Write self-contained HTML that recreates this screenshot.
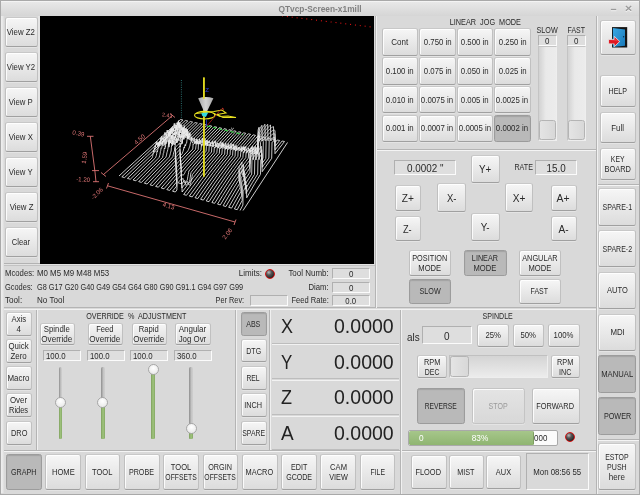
<!DOCTYPE html>
<html><head><meta charset="utf-8"><title>QTvcp-Screen-x1mill</title>
<style>
html,body{margin:0;padding:0}
body{width:640px;height:495px;overflow:hidden;position:relative;background:#d9d9d9;font-family:"Liberation Sans",sans-serif;font-size:8.25px;color:#2a2a2a}
#root{position:absolute;left:0;top:0;width:640px;height:495px;will-change:transform}
#frame{position:absolute;left:0;top:0;width:638px;height:493px;border:1px solid #a9a9a9;pointer-events:none}
#title{position:absolute;left:0;top:0;width:640px;height:16px;background:linear-gradient(#fff 0,#fff 1px,#e8e8e8 2px,#d6d6d6 15.5px,#d9d9d9)}
#lstrip{position:absolute;left:1px;top:16px;width:3px;height:477px;background:linear-gradient(to right,#efefef,#e6e6e6 70%,#d9d9d9)}
#title .wc{position:absolute;left:608px;top:0}
#title .tt{position:absolute;left:0;width:640px;top:2px;text-align:center;font-weight:bold;font-size:9.1px;line-height:14px;color:#808080}
.b{position:absolute;box-sizing:border-box;border:1px solid #c0c0c0;border-top-color:#c8c8c8;border-bottom-color:#a0a0a0;border-radius:2.5px;background:linear-gradient(#f6f6f6,#dcdcdc);display:flex;align-items:center;justify-content:center;text-align:center;line-height:1.2;white-space:nowrap;box-shadow:inset 1px 1px 0 rgba(255,255,255,.85),0 1px 0 rgba(255,255,255,.3)}
.b>div{position:relative;top:1.2px}
.b.ic>div{top:0}
.f>div{position:relative;top:1px}
.l{display:block;white-space:nowrap}
.t .l{display:inline-block}
.b.p{background:#b9b9b9;border-color:#9c9c9c;box-shadow:inset 0 1px 1px rgba(0,0,0,.12)}
.b.dis{background:linear-gradient(#e4e4e4,#d8d8d8);color:#9a9a9a;border-color:#c4c4c4}
.b.ic div{line-height:0}
.f{position:absolute;box-sizing:border-box;border:1px solid;border-color:#b0b0b0 #fbfbfb #fbfbfb #b0b0b0;background:#dedede;display:flex;align-items:center;justify-content:center;white-space:nowrap}
.f.fl{justify-content:flex-start;padding-left:2px}
.f.clock{background:#d9d9d9}
.t{position:absolute;white-space:nowrap}
.hl{position:absolute;height:1px;background:#b4b4b4;box-shadow:0 1px 0 #f4f4f4}
.vl{position:absolute;width:1px;background:#b4b4b4;box-shadow:1px 0 0 #f0f0f0}
#gl{position:absolute;left:40px;top:16px;width:334px;height:248px;background:#000;overflow:hidden}
#gl text{font-family:"Liberation Sans",sans-serif}
.led{position:absolute;width:10px;height:10px;border-radius:50%;box-sizing:border-box;border:1.4px solid #d01010;background:radial-gradient(circle at 35% 30%,#bbb 0,#555 35%,#222 80%)}
.groove{position:absolute;box-sizing:border-box;background:linear-gradient(to right,#d2d2d2,#e9e9e9 40%,#ececec);border:1px solid;border-color:#c4c4c4 #eee #eee #c4c4c4}
.hgroove{position:absolute;box-sizing:border-box;background:linear-gradient(#d4d4d4,#ececec);border:1px solid;border-color:#c0c0c0 #eee #eee #c0c0c0}
.hd{position:absolute;box-sizing:border-box;border:1px solid #b4b4b4;border-radius:2.5px;background:linear-gradient(to right,#e4e4e4,#d8d8d8)}
.pb{position:absolute;box-sizing:border-box;border:1px solid #a9a9a9;border-radius:2px;background:#fbfbfb;overflow:hidden}
.pbg{position:absolute;left:0;top:0;height:100%;background:linear-gradient(#a6c68a,#8fb571);border-right:1px solid #7d9f60;border-radius:1.5px}
.pbt{position:absolute;top:0;line-height:15.5px;font-size:8.25px;color:#2a2a2a}
.pbt.w{color:#fff}
.vg{position:absolute;box-sizing:border-box;background:linear-gradient(to right,#8e8e8e,#c4c4c4 60%,#cfcfcf);border-radius:1.5px;overflow:hidden}
.vgf{position:absolute;left:0;right:0;bottom:0;background:linear-gradient(to right,#7e9f5e,#9cc07a 45%,#9cc07a 60%,#84a764)}
.knob{position:absolute;width:11px;height:11px;box-sizing:border-box;border-radius:50%;border:1px solid #a6a6a6;background:radial-gradient(circle at 50% 35%,#fff,#ececec 70%)}
.dro{position:absolute;box-sizing:border-box;border-top:1px solid #f2f2f2;border-bottom:1px solid #bdbdbd;background:#d9d9d9;font-size:20.5px;color:#222}
.dro .ax{position:absolute;left:9.5px;top:50%;line-height:20px;margin-top:-10px}
.dro .nm{position:absolute;right:5.5px;top:50%;line-height:20px;margin-top:-10px}
</style></head>
<body>
<div id="root">
<div id="title"><span class="tt"><span class="l" style="transform:scaleX(0.918);transform-origin:center center">QTvcp-Screen-x1mill</span></span><svg class="wc" width="30" height="15" viewBox="0 0 30 15"><g stroke="#f6f6f6" stroke-width="1.3" fill="none"><path d="M2.9 10.5 H8.2"/><path d="M17.9 7.1 L23.2 11.8 M23.2 7.1 L17.9 11.8"/></g><g stroke="#9a9a9a" stroke-width="1.3" fill="none"><path d="M2.9 9.5 H8.2"/><path d="M17.9 6.1 L23.2 10.8 M23.2 6.1 L17.9 10.8"/></g></svg></div>
<div style="position:absolute;left:1px;top:263px;width:39px;height:1px;background:#b2b2b2"></div>
<div style="position:absolute;left:1px;top:264px;width:374px;height:1px;background:#e2e2e2"></div>
<div style="position:absolute;left:1px;top:265px;width:374px;height:1px;background:#c2c2c2"></div>
<div style="position:absolute;left:38px;top:16px;width:2px;height:247px;background:#e4e4e4"></div>
<div style="position:absolute;left:1px;top:307px;width:595px;height:1px;background:#b4b4b4"></div>
<div style="position:absolute;left:1px;top:309px;width:595px;height:1px;background:#f2f2f2"></div>
<div class="hl" style="left:1px;top:450px;width:595px"></div>
<div class="hl" style="left:375px;top:149px;width:221px"></div>
<div class="hl" style="left:597px;top:184px;width:42px"></div>
<div class="hl" style="left:597px;top:439px;width:42px"></div>
<div class="vl" style="left:375px;top:16px;height:292px"></div>
<div class="vl" style="left:596px;top:16px;height:478px"></div>
<div class="vl" style="left:36px;top:310px;height:140px"></div>
<div class="vl" style="left:235px;top:310px;height:140px"></div>
<div class="vl" style="left:269px;top:310px;height:140px"></div>
<div class="vl" style="left:400px;top:310px;height:184px"></div>
<div class="b " style="left:4.5px;top:17px;width:33.2px;height:30px"><div><span class="l" style="transform:scaleX(0.951);transform-origin:center center">View Z2</span></div></div>
<div class="b " style="left:4.5px;top:52px;width:33.2px;height:30px"><div><span class="l" style="transform:scaleX(0.944);transform-origin:center center">View Y2</span></div></div>
<div class="b " style="left:4.5px;top:87px;width:33.2px;height:30px"><div><span class="l" style="transform:scaleX(0.941);transform-origin:center center">View P</span></div></div>
<div class="b " style="left:4.5px;top:122px;width:33.2px;height:30px"><div><span class="l" style="transform:scaleX(0.947);transform-origin:center center">View X</span></div></div>
<div class="b " style="left:4.5px;top:157px;width:33.2px;height:30px"><div><span class="l" style="transform:scaleX(0.941);transform-origin:center center">View Y</span></div></div>
<div class="b " style="left:4.5px;top:192px;width:33.2px;height:30px"><div><span class="l" style="transform:scaleX(0.948);transform-origin:center center">View Z</span></div></div>
<div class="b " style="left:4.5px;top:227px;width:33.2px;height:30px"><div><span class="l" style="transform:scaleX(0.922);transform-origin:center center">Clear</span></div></div>
<div id="gl"><svg width="334" height="248" viewBox="0 0 334 248" style="display:block"><path d="M79.0,160.0 L86.7,152.9 L94.4,145.9 L102.1,138.8 L109.8,131.8 L117.4,124.7 L125.1,117.6 L132.8,110.6 L140.5,103.5 L142.9,104.0 L135.3,111.1 L127.6,118.2 L120.0,125.3 L112.3,132.4 L104.7,139.5 L97.1,146.6 L89.4,153.7 L81.8,160.8 L84.6,161.6 L92.2,154.4 L99.7,147.3 L107.3,140.1 L114.9,133.0 L122.5,125.9 L130.1,118.8 L137.7,111.6 L145.3,104.5 L147.8,105.0 L140.2,112.2 L139.8,112.5 L139.4,112.0 L139.0,109.9 L138.6,110.3 L138.3,106.5 L137.9,107.5 L137.5,111.0 L137.1,110.6 L136.7,110.0 L136.4,109.5 L136.0,112.2 L135.6,110.8 L135.2,111.8 L134.9,111.1 L134.5,111.3 L134.1,112.2 L133.7,114.9 L133.3,113.7 L133.0,113.1 L132.6,114.0 L132.2,114.3 L131.8,115.5 L131.4,115.3 L131.1,116.6 L130.7,117.1 L130.3,118.2 L129.9,118.5 L129.5,118.6 L129.2,119.6 L128.8,119.2 L128.4,120.1 L128.0,119.3 L127.7,121.5 L127.3,122.1 L126.9,122.6 L126.5,121.4 L126.1,121.7 L125.8,123.2 L125.4,122.9 L125.0,124.1 L124.6,123.6 L124.3,124.4 L123.9,124.6 L123.5,125.3 L123.1,126.2 L122.7,126.0 L122.4,127.7 L122.0,127.7 L121.6,127.8 L121.2,128.0 L120.9,129.3 L120.5,129.0 L120.1,129.4 L119.7,130.0 L119.3,130.2 L119.0,130.8 L118.6,131.7 L118.2,131.7 L117.8,132.3 L117.5,132.5 L117.1,133.1 L116.7,133.3 L116.3,134.1 L116.0,134.5 L115.6,134.7 L115.2,135.5 L114.8,135.9 L114.4,136.1 L114.1,136.6 L113.7,137.1 L113.3,137.5 L112.9,137.9 L112.6,138.3 L109.9,140.8 L102.4,148.0 L94.9,155.2 L87.4,162.4 L90.3,163.2 L97.7,156.0 L105.1,148.7 L112.2,141.8 L112.6,140.6 L112.9,139.1 L113.3,136.5 L113.7,134.3 L114.0,136.0 L114.4,131.9 L114.8,133.8 L115.2,129.4 L115.5,131.3 L115.9,127.5 L116.3,126.5 L116.7,129.0 L117.0,125.5 L117.4,129.3 L117.8,130.4 L118.2,126.7 L118.5,129.8 L118.9,128.4 L119.3,126.6 L119.7,124.9 L120.0,127.4 L120.4,127.8 L120.8,121.9 L121.2,125.1 L121.5,120.4 L121.9,120.3 L122.3,123.4 L122.7,122.4 L123.0,121.6 L123.4,120.3 L123.8,120.2 L124.2,120.0 L124.5,119.2 L124.9,116.4 L125.3,119.2 L125.7,119.4 L126.0,116.9 L126.4,120.0 L126.8,119.2 L127.2,114.0 L127.5,116.9 L127.9,116.4 L128.3,119.9 L128.7,116.6 L129.0,115.0 L129.4,118.7 L129.8,114.1 L130.2,113.6 L130.5,117.4 L130.9,112.9 L131.3,113.7 L131.7,111.8 L132.0,113.8 L132.4,110.9 L132.8,110.3 L133.2,115.1 L133.6,114.5 L133.9,109.7 L134.3,107.3 L134.7,112.0 L135.1,110.2 L135.4,108.9 L135.8,110.5 L136.2,109.8 L136.6,109.8 L136.9,109.0 L137.3,107.0 L137.7,108.8 L138.1,107.9 L138.5,104.7 L138.8,109.7 L139.2,106.8 L139.6,107.6 L140.0,110.9 L140.3,112.4 L140.7,113.0 L141.1,114.1 L142.6,112.7 L150.2,105.5 L152.6,106.1 L145.1,113.2 L142.4,115.8 L142.1,114.0 L141.7,113.3 L141.3,111.5 L140.9,109.2 L140.6,109.9 L140.2,110.3 L139.8,106.5 L139.4,112.1 L139.0,108.4 L138.7,106.5 L138.3,106.9 L137.9,107.0 L137.5,109.0 L137.2,107.9 L136.8,114.4 L136.4,109.3 L136.0,113.4 L135.7,111.6 L135.3,115.7 L134.9,114.9 L134.5,114.5 L134.2,115.2 L133.8,113.9 L133.4,113.2 L133.0,112.3 L132.7,113.4 L132.3,117.5 L131.9,112.8 L131.6,113.0 L131.2,117.0 L130.8,113.4 L130.4,114.6 L130.1,114.5 L129.7,121.6 L129.3,120.9 L128.9,115.7 L128.6,119.8 L128.2,120.0 L127.8,120.4 L127.4,121.3 L127.1,122.2 L126.7,118.8 L126.3,122.8 L126.0,124.3 L125.6,123.1 L125.2,120.2 L124.8,121.7 L124.5,120.9 L124.1,125.0 L123.7,126.1 L123.3,121.7 L123.0,122.3 L122.6,127.1 L122.2,125.0 L121.9,128.3 L121.5,128.0 L121.1,126.7 L120.7,123.9 L120.4,126.0 L120.0,128.6 L119.6,130.2 L119.3,125.6 L118.9,129.0 L118.5,127.4 L118.1,132.2 L117.8,133.7 L117.4,136.0 L117.0,135.3 L116.7,137.7 L116.3,139.6 L115.9,140.8 L115.5,141.8 L115.2,142.1 L107.8,149.4 L100.4,156.7 L93.1,164.0 L95.9,164.8 L103.2,157.5 L110.5,150.1 L117.8,142.8 L118.9,141.7 L119.3,141.0 L119.6,139.6 L120.0,138.4 L120.4,135.3 L120.7,134.8 L121.1,131.8 L121.5,132.3 L121.8,131.9 L122.2,128.2 L122.6,125.8 L123.0,130.1 L123.3,125.2 L123.7,123.9 L124.1,124.4 L124.4,123.9 L124.8,129.4 L125.2,124.6 L125.5,122.5 L125.9,128.0 L126.3,126.1 L126.6,125.7 L127.0,123.5 L127.4,123.9 L127.8,123.2 L128.1,120.6 L128.5,125.8 L128.9,125.1 L129.2,124.2 L129.6,123.9 L130.0,123.9 L130.4,117.0 L130.7,117.5 L131.1,122.7 L131.5,119.3 L131.8,120.3 L132.2,119.9 L132.6,119.3 L133.0,116.8 L133.3,116.9 L133.7,118.2 L134.1,119.0 L134.4,117.7 L134.8,118.8 L135.2,115.3 L135.6,113.8 L135.9,115.9 L136.3,117.7 L136.7,116.6 L137.0,114.8 L137.4,112.8 L137.8,111.1 L138.2,113.7 L138.5,110.3 L138.9,111.2 L139.3,112.2 L139.7,112.3 L140.0,111.0 L140.4,109.2 L140.8,110.9 L141.2,108.5 L141.5,109.8 L141.9,111.6 L142.3,111.2 L142.6,112.1 L143.0,115.5 L143.4,116.0 L143.8,117.3 L144.1,117.0 L147.5,113.8 L155.0,106.6 L157.4,107.1 L150.0,114.3 L145.5,118.7 L145.1,118.8 L144.7,116.8 L144.4,115.9 L144.0,112.2 L143.6,112.7 L143.3,114.1 L142.9,111.8 L142.5,112.6 L142.1,112.7 L141.8,113.3 L141.4,113.4 L141.0,111.2 L140.7,112.6 L140.3,115.6 L139.9,116.4 L139.5,116.3 L139.2,112.5 L138.8,114.7 L138.4,116.8 L138.1,119.1 L137.7,113.2 L137.3,114.9 L137.0,119.9 L136.6,115.8 L136.2,117.7 L135.8,116.2 L135.5,121.8 L135.1,116.7 L134.7,118.6 L134.4,116.3 L134.0,117.5 L133.6,119.1 L133.3,118.2 L132.9,123.8 L132.5,118.9 L132.2,125.2 L131.8,124.4 L131.4,119.8 L131.0,125.7 L130.7,126.2 L130.3,126.9 L129.9,122.0 L129.6,126.9 L129.2,128.2 L128.8,124.4 L128.5,128.3 L128.1,125.3 L127.7,124.5 L127.4,125.3 L127.0,124.8 L126.6,124.5 L126.3,126.4 L125.9,125.7 L125.5,131.2 L125.2,130.4 L124.8,133.0 L124.4,132.1 L124.1,133.6 L123.7,136.9 L123.3,137.4 L123.0,139.5 L122.6,141.3 L120.4,143.5 L113.2,150.8 L105.9,158.2 L98.7,165.6 L101.5,166.4 L108.7,159.0 L115.8,151.5 L123.0,144.1 L125.9,141.2 L126.3,139.9 L126.7,138.1 L127.0,136.4 L127.4,135.2 L127.8,133.7 L128.1,131.3 L128.5,128.0 L128.9,131.2 L129.2,130.8 L129.6,125.7 L129.9,124.1 L130.3,126.6 L130.7,126.8 L131.0,124.5 L131.4,127.9 L131.8,127.0 L132.1,127.1 L132.5,124.0 L132.9,125.5 L133.2,125.8 L133.6,122.1 L134.0,119.8 L134.3,124.2 L134.7,120.9 L135.1,122.6 L135.4,119.1 L135.8,120.7 L136.2,122.6 L136.5,122.6 L136.9,123.6 L137.3,120.0 L137.6,120.3 L138.0,121.4 L138.4,119.7 L138.7,119.6 L139.1,116.0 L139.5,120.2 L139.8,113.7 L140.2,117.0 L140.6,115.8 L140.9,116.4 L141.3,113.4 L141.7,113.1 L142.0,114.6 L142.4,114.8 L142.8,112.7 L143.2,111.4 L143.5,114.3 L143.9,111.5 L144.3,109.6 L144.6,112.8 L145.0,115.6 L145.4,116.7 L145.7,116.3 L146.1,118.2 L146.5,119.8 L146.9,120.3 L152.4,114.9 L159.8,107.6 L162.3,108.1 L154.9,115.4 L148.2,122.0 L147.9,121.4 L147.5,120.7 L147.1,118.3 L146.8,116.1 L146.4,112.6 L146.0,112.3 L145.6,116.2 L145.3,112.7 L144.9,114.2 L144.5,114.4 L144.2,117.5 L143.8,114.5 L143.4,114.8 L143.1,118.0 L142.7,114.3 L142.3,120.7 L142.0,115.3 L141.6,115.8 L141.2,121.7 L140.9,118.1 L140.5,121.3 L140.2,122.8 L139.8,120.1 L139.4,121.6 L139.1,117.9 L138.7,120.9 L138.3,124.0 L138.0,122.3 L137.6,123.1 L137.2,124.2 L136.9,126.9 L136.5,122.4 L136.1,123.5 L135.8,124.4 L135.4,124.8 L135.1,122.8 L134.7,128.5 L134.3,128.9 L134.0,124.6 L133.6,127.2 L133.2,128.4 L132.9,124.8 L132.5,129.5 L132.2,126.3 L131.8,128.5 L131.4,131.2 L131.1,135.0 L130.7,136.2 L130.3,137.7 L130.0,139.0 L129.6,140.2 L129.3,141.1 L125.7,144.8 L118.5,152.3 L111.4,159.7 L104.3,167.2 L107.1,168.0 L114.2,160.5 L121.2,153.0 L128.3,145.5 L132.6,141.0 L132.9,140.5 L133.3,138.6 L133.7,136.9 L134.0,135.4 L134.4,135.2 L134.7,131.7 L135.1,130.0 L135.4,128.0 L135.8,125.5 L136.2,126.2 L136.5,126.9 L136.9,123.4 L137.2,126.2 L137.6,125.8 L138.0,123.8 L138.3,124.4 L138.7,124.3 L139.1,123.3 L139.4,124.3 L139.8,124.9 L140.1,125.5 L140.5,125.9 L140.9,120.9 L141.2,120.3 L141.6,121.4 L142.0,119.6 L142.3,122.0 L142.7,122.3 L143.0,121.1 L143.4,117.2 L143.8,122.8 L144.1,119.1 L144.5,120.6 L144.9,116.5 L145.2,119.1 L145.6,118.9 L146.0,118.0 L146.3,116.6 L146.7,114.6 L147.0,117.3 L147.4,113.3 L147.8,119.2 L148.1,119.4 L148.5,121.2 L148.9,122.1 L149.2,122.5 L149.6,123.6 L150.0,123.3 L157.3,115.9 L164.7,108.6 L167.1,109.1 L159.8,116.5 L152.5,123.8 L151.0,125.3 L150.6,124.6 L150.3,122.6 L149.9,122.3 L149.5,119.9 L149.2,118.1 L148.8,117.6 L148.5,116.7 L148.1,116.3 L147.7,122.2 L147.4,117.4 L147.0,118.6 L146.6,119.9 L146.3,117.5 L145.9,121.9 L145.6,119.5 L145.2,117.8 L144.8,120.6 L144.5,121.4 L144.1,122.0 L143.8,123.5 L143.4,119.8 L143.0,120.6 L142.7,121.6 L142.3,127.6 L142.0,122.5 L141.6,127.2 L141.2,128.4 L140.9,127.2 L140.5,128.5 L140.2,131.1 L139.8,126.8 L139.4,127.2 L139.1,127.5 L138.7,127.9 L138.4,128.3 L138.0,128.7 L137.7,129.0 L137.3,129.4 L136.9,129.8 L136.6,130.2 L136.2,130.5 L135.9,130.9 L135.5,131.3 L135.2,141.6 L130.9,146.1 L123.9,153.7 L116.9,161.2 L110.0,168.8 L112.8,169.6 L119.6,162.0 L126.6,154.4 L133.5,146.8 L135.3,144.9 L135.6,134.5 L136.0,134.2 L136.3,133.8 L136.7,133.4 L137.1,133.0 L137.4,132.7 L137.8,132.3 L138.1,131.9 L138.5,131.5 L138.8,131.2 L139.2,130.8 L139.5,130.4 L139.9,130.0 L140.2,139.7 L140.6,139.3 L142.0,137.8 L142.4,137.2 L142.7,136.1 L143.1,135.2 L143.4,134.0 L143.8,132.1 L144.1,131.0 L144.5,132.1 L144.9,129.0 L145.2,128.5 L145.6,129.9 L145.9,127.6 L146.3,127.3 L146.6,127.3 L147.0,123.6 L147.4,119.9 L147.7,123.1 L148.1,118.8 L148.4,119.7 L148.8,123.3 L149.2,117.7 L149.5,119.2 L149.9,116.5 L150.2,117.7 L150.6,118.1 L151.0,121.8 L151.3,120.9 L151.7,124.2 L152.0,125.2 L152.4,127.0 L154.9,124.4 L162.2,117.0 L169.5,109.6 L171.9,110.2 L164.7,117.5 L157.4,125.0 L154.9,127.6 L154.5,124.3 L154.2,121.8 L153.8,124.7 L153.5,125.0 L153.1,124.0 L152.8,123.1 L152.4,123.1 L152.0,121.6 L151.7,125.0 L151.3,125.4 L151.0,125.9 L150.6,126.4 L150.2,128.1 L149.9,130.0 L149.5,130.8 L149.2,131.9 L148.8,132.8 L148.5,133.6 L148.1,134.4 L147.8,135.0 L143.2,139.9 L140.3,142.9 L140.0,133.3 L139.6,133.7 L139.3,134.1 L138.9,134.4 L138.6,134.8 L138.2,135.2 L137.9,135.6 L137.6,136.0 L137.2,136.3 L136.9,136.7 L136.5,137.1 L136.2,137.5 L135.8,137.9 L135.5,148.2 L129.2,155.1 L122.4,162.8 L115.6,170.4 L118.4,171.2 L125.1,163.5 L131.9,155.8 L135.7,151.6 L136.0,141.2 L136.4,140.8 L136.7,140.4 L137.1,140.1 L137.4,139.7 L137.7,139.3 L138.1,138.9 L138.4,138.5 L138.8,138.1 L139.1,137.8 L139.5,137.4 L139.8,137.0 L140.2,136.6 L140.5,146.2 L145.7,140.5 L152.8,133.0 L153.1,127.6 L153.5,128.4 L153.8,128.1 L154.2,127.7 L154.5,127.6 L154.9,125.5 L155.3,127.3 L155.6,125.0 L156.0,124.8 L156.3,123.1 L156.7,125.6 L157.0,123.7 L157.4,123.3 L157.8,127.8 L159.9,125.5 L167.1,118.1 L174.4,110.7 L176.8,111.2 L169.6,118.6 L162.4,126.1 L160.3,128.3 L159.9,124.5 L159.5,122.8 L159.2,126.2 L158.8,126.3 L158.5,125.6 L158.1,124.8 L157.8,127.2 L157.4,126.2 L157.1,128.3 L156.7,128.1 L156.4,125.1 L156.0,129.7 L155.6,133.2 L155.3,133.6 L148.3,141.2 L141.4,148.8 L140.7,149.6 L140.4,140.0 L140.0,140.3 L139.7,140.7 L139.4,141.1 L139.0,141.5 L138.7,141.9 L138.3,142.3 L138.0,142.7 L137.7,143.0 L137.3,143.4 L137.0,143.8 L136.6,144.2 L136.3,144.6 L136.0,155.0 L134.6,156.5 L127.9,164.3 L121.2,172.0 L124.0,172.8 L130.6,165.0 L136.0,158.8 L136.3,148.4 L136.6,148.0 L137.0,147.6 L137.3,147.2 L137.6,146.8 L138.0,146.4 L138.3,146.1 L138.6,145.7 L139.0,145.3 L139.3,144.9 L139.6,144.5 L140.0,144.1 L140.3,143.7 L140.6,143.3 L141.0,153.0 L144.0,149.5 L150.9,141.8 L157.8,134.2 L158.2,133.8 L158.5,126.9 L158.9,128.0 L159.2,125.5 L159.6,127.9 L159.9,127.8 L160.3,127.3 L160.6,124.5 L161.0,125.0 L161.3,125.9 L161.7,126.6 L162.0,123.6 L162.4,121.9 L162.8,128.9 L164.9,126.6 L172.0,119.2 L179.2,111.7 L181.6,112.2 L174.5,119.7 L167.4,127.2 L165.6,129.1 L165.2,124.3 L164.9,122.5 L164.5,126.3 L164.2,123.6 L163.8,125.0 L163.5,128.1 L163.1,128.6 L162.8,128.4 L162.4,129.1 L162.1,129.7 L161.7,130.2 L161.4,128.0 L161.0,134.0 L160.3,134.8 L153.4,142.4 L146.6,150.1 L141.3,156.4 L141.0,146.8 L140.6,147.1 L140.3,147.5 L140.0,147.9 L139.6,148.3 L139.3,148.7 L139.0,149.1 L138.6,149.5 L138.3,149.9 L138.0,150.3 L137.7,150.7 L137.3,151.1 L137.0,151.5 L136.7,151.8 L136.3,162.2 L133.4,165.8 L126.8,173.6 L129.7,174.4 L136.1,166.5 L136.5,166.1 L136.8,155.7 L137.1,155.3 L137.4,154.9 L137.8,154.5 L138.1,154.2 L138.4,153.8 L138.7,153.4 L139.1,153.0 L139.4,152.6 L139.7,152.2 L140.0,151.8 L140.4,151.4 L140.7,151.0 L141.0,150.6 L141.3,160.2 L142.7,158.6 L143.0,158.8 L143.3,158.9 L143.6,158.8 L144.0,158.5 L144.3,158.0 L144.6,157.3 L145.0,156.5 L145.3,155.5 L149.3,150.8 L156.0,143.1 L162.9,135.4 L163.6,134.6 L163.9,127.6 L164.3,126.7 L164.6,126.2 L164.9,129.9 L165.3,128.3 L165.6,126.6 L166.0,124.7 L166.3,128.2 L166.7,126.9 L167.0,124.0 L167.4,126.9 L167.7,125.3 L168.1,129.7 L169.8,127.8 L176.9,120.2 L184.0,112.7 L186.5,113.2 L179.4,120.8 L172.3,128.3 L170.6,130.2 L170.2,126.6 L169.9,126.1 L169.5,126.7 L169.2,124.6 L168.8,126.7 L168.5,125.8 L168.2,126.6 L167.8,127.0 L167.5,129.9 L167.1,126.9 L166.8,128.4 L166.4,130.3 L166.1,135.2 L165.4,136.0 L158.6,143.7 L151.9,151.5 L148.9,155.0 L148.6,156.4 L148.3,158.3 L147.9,160.3 L147.6,162.1 L147.3,163.9 L147.0,164.4 L146.6,164.8 L146.3,165.2 L146.0,165.6 L145.7,166.0 L145.3,166.3 L145.0,166.7 L144.7,167.1 L144.4,166.9 L144.0,165.9 L143.7,164.8 L143.4,163.6 L143.1,162.4 L142.7,162.5 L141.5,164.1 L141.1,154.5 L140.8,154.9 L140.5,155.3 L140.2,155.7 L139.8,156.1 L139.5,156.5 L139.2,156.9 L138.9,157.3 L138.6,157.7 L138.2,158.1 L137.9,158.5 L137.6,158.9 L137.3,159.3 L136.9,159.7 L136.6,170.1 L132.5,175.2 L135.3,176.0 L136.9,174.0 L137.2,163.6 L137.5,163.2 L137.8,162.8 L138.1,162.4 L138.4,162.0 L138.8,161.6 L139.1,161.2 L139.4,160.8 L139.7,160.4 L140.0,160.0 L140.4,159.6 L140.7,159.2 L141.0,158.8 L141.3,158.4 L141.6,168.0 L144.5,164.4 L144.8,164.6 L145.1,165.9 L145.5,167.3 L145.8,168.7 L146.1,169.4 L146.4,169.0 L146.7,168.6 L147.1,168.3 L147.4,167.9 L147.7,167.5 L148.0,167.1 L148.3,166.7 L148.7,166.3 L149.0,165.9 L149.3,165.5 L149.6,165.1 L150.0,163.3 L150.3,161.2 L150.6,159.0 L150.9,156.8 L151.3,156.1 L154.5,152.1 L161.1,144.3 L167.9,136.6 L168.9,135.4 L169.3,128.5 L169.6,129.5 L170.0,130.0 L170.3,130.1 L170.7,127.2 L171.0,127.4 L171.4,126.5 L171.7,127.6 L172.0,126.8 L172.4,127.9 L172.7,125.0 L173.1,127.7 L173.4,130.4 L174.8,128.9 L181.8,121.3 L188.9,113.7 L191.3,114.2 L184.3,121.8 L177.3,129.5 L175.9,131.0 L175.6,125.1 L175.2,124.7 L174.9,127.1 L174.5,125.6 L174.2,126.0 L173.9,127.4 L173.5,126.9 L173.2,130.0 L172.8,131.0 L172.5,128.8 L172.1,128.8 L171.8,130.5 L171.5,136.0 L170.4,137.2 L163.7,144.9 L157.1,152.8 L152.6,158.4 L152.3,158.9 L152.0,160.7 L151.7,162.4 L151.3,164.0 L151.0,165.5 L150.7,166.7 L150.4,167.8 L150.1,168.5 L149.7,169.0 L149.4,169.2 L149.1,169.1 L148.8,168.7 L148.5,168.1 L148.2,167.4 L147.8,166.5 L147.5,165.6 L147.2,165.2 L144.4,168.8 L141.9,172.0 L141.5,162.4 L141.2,162.8 L140.9,163.2 L140.6,163.6 L140.3,164.0 L140.0,164.4 L139.7,164.8 L139.3,165.2 L139.0,165.6 L138.7,166.0 L138.4,166.4 L138.1,166.8 L140.9,167.7 L141.2,167.2 L141.5,166.8 L141.8,166.4 L142.1,176.0 L147.1,169.5 L153.4,161.5 L159.8,153.5 L166.3,145.6 L173.0,137.8 L174.0,136.6 L174.3,131.7 L174.7,131.1 L175.0,132.1 L175.3,130.2 L175.7,127.4 L176.0,130.8 L176.4,128.3 L176.7,130.0 L177.0,129.7 L177.4,126.8 L177.7,128.3 L178.1,128.7 L178.4,131.6 L179.8,130.0 L186.7,122.4 L193.7,114.8 L196.1,115.3 L189.2,122.9 L182.3,130.6 L181.2,131.7 L180.9,125.6 L180.6,126.8 L180.2,126.4 L179.9,128.4 L179.5,128.2 L179.2,130.1 L178.9,127.1 L178.5,130.8 L178.2,132.2 L177.8,130.0 L177.5,130.1 L177.2,132.7 L176.8,136.8 L175.5,138.3 L168.9,146.2 L162.4,154.1 L156.1,162.2 L149.9,170.3 L143.7,178.5 L146.5,179.3 L152.6,171.1 L158.7,162.9 L165.0,154.8 L171.4,146.8 L178.0,138.9 L179.3,137.4 L179.7,131.6 L180.0,132.7 L180.4,132.4 L180.7,132.5 L181.0,128.7 L181.4,131.5 L181.7,131.5 L182.0,126.9 L182.4,130.0 L182.7,126.5 L183.1,129.7 L183.4,127.6 L183.7,132.3 L184.8,131.2 L191.6,123.4 L198.5,115.8 L201.0,116.3 L194.1,124.0 L187.2,131.7 L186.2,132.9 L185.9,127.6 L185.5,126.9 L185.2,130.6 L184.9,129.4 L184.5,129.1 L184.2,130.7 L183.9,128.7 L183.5,129.6 L183.2,130.5 L182.9,131.0 L182.5,130.4 L182.2,133.6 L181.9,138.0 L180.5,139.5 L174.0,147.4 L167.6,155.5 L161.4,163.6 L155.4,171.8 L149.3,180.1 L152.2,180.9 L158.1,172.6 L164.1,164.3 L170.3,156.1 L176.6,148.1 L183.1,140.1 L184.7,138.2 L185.0,131.1 L185.4,133.4 L185.7,131.6 L186.0,131.5 L186.4,129.9 L186.7,132.5 L187.0,130.9 L187.4,129.8 L187.7,131.3 L188.0,128.7 L188.4,127.5 L188.7,128.6 L189.1,133.1 L189.7,132.3 L196.5,124.5 L203.4,116.8 L205.8,117.3 L199.0,125.1 L192.2,132.8 L191.5,133.6 L191.2,127.8 L190.9,127.2 L190.5,131.1 L190.2,131.2 L189.9,132.2 L189.5,131.0 L189.2,131.9 L188.9,129.3 L188.5,132.6 L188.2,133.6 L187.9,132.2 L187.6,132.4 L187.2,138.7 L185.6,140.7 L179.1,148.7 L172.9,156.8 L166.8,165.0 L160.8,173.3 L155.0,181.7 L157.8,182.5 L163.6,174.1 L169.5,165.7 L175.5,157.5 L181.7,149.3 L188.1,141.3 L190.1,138.9 L190.4,131.6 L190.7,130.7 L191.0,132.0 L191.4,130.2 L191.7,131.5 L192.0,131.7 L192.4,128.9 L192.7,128.7 L193.0,128.1 L193.4,129.8 L193.7,128.1 L194.0,134.2 L194.7,133.4 L201.4,125.6 L208.2,117.8 L210.6,118.3 L203.9,126.1 L197.2,134.0 L196.8,134.4 L196.5,131.6 L196.2,129.3 L195.9,130.2 L195.5,131.6 L195.2,130.1 L194.9,133.3 L194.5,133.3 L194.2,130.3 L193.9,133.6 L193.6,131.2 L193.2,131.2 L192.9,134.3 L192.6,139.5 L190.6,141.9 L184.3,150.0 L178.1,158.1 L172.2,166.4 L166.3,174.8 L160.6,183.3 L163.4,184.1 L169.1,175.6 L174.8,167.1 L180.7,158.8 L186.8,150.6 L193.2,142.5 L195.1,140.1 L195.4,133.3 L195.7,135.1 L196.1,134.0 L196.4,134.0 L196.7,131.8 L197.0,131.3 L197.4,133.0 L197.7,133.4 L198.0,132.2 L198.3,131.3 L198.7,132.4 L199.0,131.6 L199.3,134.9 L199.7,134.5 L206.3,126.7 L213.1,118.8 L215.5,119.4 L208.8,127.2 L202.1,135.1 L201.8,135.5 L201.5,130.5 L201.2,130.9 L200.8,131.6 L200.5,132.7 L200.2,133.8 L199.9,133.2 L199.5,131.3 L199.2,131.3 L198.9,131.7 L198.6,133.3 L198.2,133.5 L197.9,140.3 L195.7,143.1 L189.4,151.2 L183.4,159.5 L177.5,167.9 L171.8,176.3 L166.2,184.9 L169.0,185.7 L174.6,177.1 L180.2,168.6 L186.0,160.1 L192.0,151.8 L198.2,143.7 L200.4,140.9 L200.8,135.8 L201.1,133.2 L201.4,135.4 L201.7,134.2 L202.0,131.9 L202.4,131.8 L202.7,133.7 L203.0,133.6 L203.3,130.6 L203.7,133.8 L204.0,132.9 L204.3,130.7 L204.6,135.7 L211.2,127.7 L217.9,119.9 L220.3,120.4 L213.7,128.3 L207.1,136.2 L206.8,133.6 L206.5,133.2 L206.1,134.3 L205.8,130.4 L205.5,131.7 L205.2,131.2 L204.9,133.9 L204.5,133.0 L204.2,135.9 L203.9,137.0 L203.6,136.9 L203.3,135.6 L202.9,141.4 L200.7,144.3 L194.6,152.5 L188.6,160.8 L182.9,169.3 L177.3,177.8 L171.9,186.5 L174.7,187.3 L180.1,178.6 L185.6,170.0 L191.2,161.5 L197.1,153.1 L203.2,144.9 L205.8,141.6 L206.1,136.3 L206.4,136.3 L206.7,137.2 L207.0,134.6 L207.4,136.2 L207.7,134.8 L208.0,134.7 L208.3,131.8 L208.6,133.1 L209.0,133.4 L209.3,134.0 L209.6,136.8 L216.1,128.8 L217.8,126.8 L218.1,114.2 L218.4,113.0 L218.8,112.0 L219.1,111.2 L219.4,124.9 L222.7,120.9 L225.2,121.4 L222.2,125.0 L221.9,109.3 L221.5,109.9 L221.2,110.4 L220.9,111.0 L220.5,111.6 L220.2,112.3 L219.9,112.9 L219.6,113.6 L219.2,114.4 L218.9,115.1 L218.6,116.0 L218.2,117.1 L217.9,130.1 L212.1,137.4 L211.8,131.0 L211.4,132.9 L211.1,132.0 L210.8,132.6 L210.5,135.8 L210.2,135.7 L209.9,133.5 L209.5,133.5 L209.2,135.0 L208.9,135.6 L208.6,136.9 L208.3,142.2 L205.8,145.5 L199.7,153.7 L193.9,162.1 L188.3,170.7 L182.8,179.4 L177.5,188.1 L180.3,188.9 L185.6,180.1 L190.9,171.4 L196.5,162.8 L202.3,154.4 L208.3,146.1 L210.8,142.8 L211.1,136.9 L211.4,137.7 L211.7,137.8 L212.0,138.1 L212.3,134.9 L212.7,133.3 L213.0,132.9 L213.3,134.4 L213.6,133.1 L213.9,131.5 L214.3,131.7 L214.6,132.2 L214.9,137.5 L217.8,133.9 L218.1,121.2 L218.4,120.0 L218.7,119.1 L219.1,118.3 L219.4,117.5 L219.7,116.8 L220.0,116.1 L220.4,115.5 L220.7,114.9 L221.0,114.3 L221.3,113.7 L221.7,113.1 L222.0,112.6 L222.3,112.0 L222.7,111.5 L223.0,111.0 L223.3,110.5 L223.6,110.0 L224.0,109.6 L224.3,109.1 L224.6,108.6 L224.9,108.2 L225.3,124.7 L227.6,121.9 L230.0,122.4 L228.0,124.8 L227.7,108.3 L227.4,108.7 L227.0,109.0 L226.7,109.4 L226.4,109.8 L226.1,110.2 L225.7,110.6 L225.4,111.1 L225.1,111.5 L224.8,111.9 L224.4,112.4 L224.1,112.9 L223.8,113.3 L223.5,113.8 L223.1,114.3 L222.8,114.8 L222.5,115.3 L222.2,115.8 L221.9,116.4 L221.5,116.9 L221.2,117.5 L220.9,118.1 L220.6,118.7 L220.2,119.3 L219.9,120.0 L219.6,120.7 L219.3,121.4 L219.0,122.2 L218.6,123.0 L218.3,124.0 L218.0,125.3 L217.7,137.7 L217.4,138.1 L217.1,131.9 L216.7,133.8 L216.4,134.7 L216.1,134.9 L215.8,134.6 L215.5,133.0 L215.2,134.8 L214.8,137.5 L214.5,138.0 L214.2,136.8 L213.9,137.7 L213.6,143.0 L213.0,143.8 L212.7,130.2 L212.4,130.6 L212.0,131.0 L211.7,131.4 L211.4,131.8 L211.1,132.2 L210.8,132.7 L210.5,133.1 L210.2,133.5 L209.9,147.9 L204.8,155.0 L202.2,158.8 L201.9,146.2 L201.6,146.6 L201.4,147.1 L201.1,147.5 L200.8,147.9 L200.5,148.3 L200.2,148.8 L199.9,149.2 L199.7,149.6 L199.4,150.0 L199.1,150.5 L198.8,163.9 L193.6,172.1 L188.3,180.9 L183.1,189.7 L185.9,190.5 L191.1,181.6 L196.3,172.8 L199.5,167.6 L199.8,154.2 L200.1,153.7 L200.3,153.3 L200.6,152.9 L200.9,152.4 L201.2,152.0 L201.4,151.6 L201.7,151.1 L202.0,150.7 L202.3,150.3 L202.6,149.8 L202.8,149.4 L203.1,149.0 L203.4,148.6 L203.7,161.1 L207.4,155.6 L209.7,152.2 L210.0,137.8 L210.3,137.4 L210.6,137.0 L210.9,136.6 L211.2,136.2 L211.5,135.7 L211.8,135.3 L212.1,134.9 L212.4,134.5 L212.7,134.1 L213.0,133.7 L213.3,133.3 L213.6,132.8 L214.0,132.4 L214.3,132.0 L214.6,131.6 L214.9,131.2 L215.2,130.8 L215.5,130.4 L215.8,144.0 L216.1,143.5 L216.4,138.1 L216.7,135.4 L217.0,138.6 L217.3,137.5 L217.7,136.1 L218.0,136.2 L218.3,127.9 L218.6,126.9 L218.9,126.0 L219.2,125.3 L219.5,124.5 L219.9,123.8 L220.2,123.2 L220.5,122.5 L220.8,121.9 L221.1,121.3 L221.4,120.8 L221.8,120.2 L222.1,119.7 L222.4,119.1 L222.7,118.6 L223.0,118.1 L223.4,117.6 L223.7,117.1 L224.0,116.6 L224.3,116.2 L224.6,115.7 L225.0,115.3 L225.3,114.8 L225.6,114.4 L225.9,114.0 L226.2,113.6 L226.6,113.2 L226.9,112.8 L227.2,112.4 L227.5,112.0 L227.9,111.6 L228.2,111.3 L228.5,110.9 L228.8,110.6 L229.2,110.2 L229.5,109.9 L229.8,109.6 L230.1,109.3 L230.5,109.0 L230.8,124.9 L232.4,122.9 L234.8,123.5 L233.9,124.7 L233.5,110.6 L233.2,110.7 L232.9,110.8 L232.6,111.0 L232.2,111.2 L231.9,111.4 L231.6,111.6 L231.3,111.9 L230.9,112.1 L230.6,112.4 L230.3,112.7 L230.0,113.0 L229.7,113.3 L229.3,113.6 L229.0,114.0 L228.7,114.3 L228.4,114.6 L228.1,115.0 L227.7,115.4 L227.4,115.7 L227.1,116.1 L226.8,116.5 L226.5,116.9 L226.1,117.3 L225.8,117.8 L225.5,118.2 L225.2,118.6 L224.9,119.1 L224.5,119.5 L224.2,120.0 L223.9,120.4 L223.6,120.9 L223.3,121.4 L223.0,121.9 L222.6,122.4 L222.3,123.0 L222.0,123.5 L221.7,124.0 L221.4,124.6 L221.1,125.2 L220.8,125.8 L220.5,126.4 L220.2,136.9 L219.8,137.0 L219.5,137.3 L219.2,143.3 L218.9,143.7 L218.6,130.1 L218.3,130.5 L218.0,130.9 L217.7,131.4 L217.4,131.8 L217.1,132.2 L216.8,132.6 L216.5,133.0 L216.2,133.4 L215.9,133.8 L215.6,134.3 L215.3,134.7 L215.0,135.1 L214.7,135.5 L214.4,135.9 L214.1,136.3 L213.8,136.8 L213.5,137.2 L213.2,137.6 L212.9,138.0 L212.6,138.4 L212.3,138.9 L212.0,139.3 L211.7,139.7 L211.4,140.1 L211.1,140.5 L210.8,141.0 L210.5,141.4 L210.3,141.8 L210.0,156.2 L204.3,164.8 L204.1,165.2 L203.8,152.7 L203.5,153.1 L203.3,153.5 L203.0,154.0 L202.7,154.4 L202.4,154.8 L202.2,155.3 L201.9,155.7 L201.6,156.1 L201.4,156.6 L201.1,157.0 L200.8,157.5 L200.6,157.9 L200.3,158.3 L200.0,171.8 L199.0,173.5 L193.8,182.4 L188.7,191.3 L191.6,192.1 L196.6,183.1 L200.9,175.6 L201.1,162.1 L201.4,161.7 L201.7,161.2 L201.9,160.8 L202.2,160.4 L202.4,159.9 L202.7,159.5 L203.0,159.0 L203.2,158.6 L203.5,158.2 L203.8,157.7 L204.0,157.3 L204.3,156.8 L204.6,156.4 L204.8,169.0 L207.0,165.5 L211.7,158.1 L212.0,143.7 L212.3,143.3 L212.5,142.9 L212.8,142.4 L213.1,142.0 L213.4,141.6 L213.7,141.2 L214.0,140.7 L214.3,140.3 L214.6,139.9 L214.8,139.5 L215.1,139.1 L215.4,138.6 L215.7,138.2 L216.0,137.8 L216.3,137.4 L216.6,136.9 L216.9,136.5 L217.2,136.1 L217.5,135.7 L217.8,135.3 L218.1,134.9 L218.4,134.4 L218.7,134.0 L219.0,133.6 L219.3,133.2 L219.6,132.8 L219.9,132.4 L220.2,131.9 L220.5,131.5 L220.8,131.1 L221.1,130.7 L221.4,130.3 L221.7,143.9 L223.0,142.2 L223.3,125.3 L223.6,124.8 L223.9,124.3 L224.2,123.8 L224.5,123.3 L224.8,122.9 L225.1,122.4 L225.4,122.0 L225.8,121.6 L226.1,121.1 L226.4,120.7 L226.7,120.3 L227.0,119.9 L227.3,119.5 L227.6,119.1 L228.0,118.8 L228.3,118.4 L228.6,118.1 L228.9,117.7 L229.2,117.4 L229.5,117.0 L229.9,116.7 L230.2,116.4 L230.5,116.1 L230.8,115.8 L231.1,115.6 L231.5,115.3 L231.8,115.1 L232.1,114.9 L232.4,114.7 L232.7,114.5 L233.1,114.3 L233.4,114.2 L233.7,114.1 L234.0,114.1 L234.3,114.1 L234.7,114.3 L235.0,114.8 L235.3,126.4 L237.2,124.0 L239.7,124.5 L235.2,130.1 L234.9,118.1 L234.5,117.8 L234.2,117.7 L233.9,117.7 L233.6,117.8 L233.3,117.9 L233.0,118.0 L232.6,118.2 L232.3,118.4 L232.0,118.6 L231.7,118.8 L231.4,119.1 L231.1,119.3 L230.7,119.6 L230.4,119.9 L230.1,120.2 L229.8,120.5 L229.5,120.8 L229.2,121.2 L228.9,121.5 L228.5,121.9 L228.2,122.2 L227.9,122.6 L227.6,123.0 L227.3,123.4 L227.0,123.7 L226.7,124.2 L226.4,124.6 L226.1,125.0 L225.8,142.4 L222.1,147.4 L221.8,133.8 L221.5,134.2 L221.2,134.6 L220.9,135.0 L220.6,135.5 L220.3,135.9 L220.0,136.3 L219.7,136.7 L219.4,137.1 L219.1,137.6 L218.9,138.0 L218.6,138.4 L218.3,138.8 L218.0,139.2 L217.7,139.7 L217.4,140.1 L217.1,140.5 L216.8,140.9 L216.5,141.4 L216.2,141.8 L216.0,142.2 L215.7,142.6 L215.4,143.1 L215.1,143.5 L214.8,143.9 L214.5,158.4 L209.6,166.1 L205.4,173.2 L205.1,160.6 L204.9,161.1 L204.6,161.5 L204.3,161.9 L204.1,162.4 L203.8,162.8 L203.6,163.3 L203.3,163.7 L203.1,164.2 L202.8,164.6 L202.6,165.1 L202.3,165.5 L202.1,166.0 L201.8,166.4 L201.6,179.9 L199.3,183.9 L194.4,192.9 L197.2,193.7 L202.1,184.6 L202.3,171.2 L202.5,170.7 L202.8,170.3 L203.0,169.8 L203.3,169.4 L203.5,168.9 L203.8,168.5 L204.0,168.0 L204.3,167.6 L204.5,167.1 L204.8,166.7 L205.0,166.2 L205.3,165.8 L205.5,165.3 L205.8,164.9 L206.0,177.4 L207.0,175.7 L212.2,166.8 L217.7,158.1 L218.0,143.7 L218.2,143.3 L218.5,142.8 L218.8,142.4 L219.1,142.0 L219.4,141.6 L219.7,141.1 L219.9,140.7 L220.2,140.3 L220.5,139.9 L220.8,139.4 L221.1,139.0 L221.4,138.6 L221.7,138.2 L222.0,137.7 L222.3,151.3 L223.4,149.6 L228.9,142.1 L229.2,125.0 L229.5,124.7 L229.8,124.3 L230.1,124.0 L230.4,123.7 L230.7,123.4 L231.0,123.1 L231.3,122.9 L231.6,122.6 L232.0,122.4 L232.3,122.2 L232.6,121.9 L232.9,121.8 L233.2,121.6 L233.5,121.5 L233.8,121.4 L234.1,121.4 L234.5,121.5 L234.8,121.7 L235.1,133.9 L235.7,133.1 L242.1,125.0 L244.5,125.5 L238.2,133.6 L235.0,137.7 L234.7,125.4 L234.4,125.2 L234.1,125.2 L233.8,125.2 L233.5,125.3 L233.2,125.4 L232.9,125.6 L232.6,125.8 L232.3,126.0 L232.0,126.2 L231.7,142.3 L226.0,150.2 L222.2,155.7 L221.9,142.2 L221.7,142.6 L221.4,143.0 L221.1,143.5 L220.8,143.9 L220.5,158.3 L220.2,158.8 L214.8,167.5 L209.7,176.4 L206.7,181.8 L206.5,169.2 L206.3,169.7 L206.0,170.1 L205.8,170.6 L205.5,171.0 L205.3,171.5 L205.0,171.9 L204.8,172.4 L204.6,172.9 L204.3,173.3 L204.1,173.8 L203.8,174.2 L203.6,174.7 L203.4,175.1 L203.1,175.6 L202.9,189.0 L200.0,194.5" fill="none" stroke="#ececec" stroke-width="0.85" stroke-linejoin="round"/><path d="M203.0,194.5 L247.5,126.5" stroke="#fff" stroke-width="0.8" fill="none"/><line x1="63.5" y1="158.5" x2="132.5" y2="99.5" stroke="#dc7474" stroke-width="0.9" /><line x1="61.0" y1="156.5" x2="66.0" y2="160.5" stroke="#dc7474" stroke-width="0.9" /><line x1="130.0" y1="97.5" x2="135.0" y2="101.5" stroke="#dc7474" stroke-width="0.9" /><line x1="67.5" y1="169.8" x2="195.0" y2="206.0" stroke="#dc7474" stroke-width="0.9" /><line x1="66.5" y1="172.5" x2="68.5" y2="167.0" stroke="#dc7474" stroke-width="0.9" /><line x1="194.0" y1="209.0" x2="196.0" y2="203.5" stroke="#dc7474" stroke-width="0.9" /><line x1="50.3" y1="120.3" x2="55.0" y2="156.0" stroke="#dc7474" stroke-width="0.9" /><line x1="55.0" y1="156.0" x2="56.0" y2="166.0" stroke="#dc7474" stroke-width="0.9" /><line x1="47.0" y1="120.3" x2="53.5" y2="120.3" stroke="#dc7474" stroke-width="0.9" /><line x1="52.0" y1="154.6" x2="59.0" y2="154.6" stroke="#dc7474" stroke-width="0.9" /><line x1="53.0" y1="165.7" x2="59.0" y2="165.7" stroke="#dc7474" stroke-width="0.9" /><text x="38.0" y="119.5" fill="#dc7474" font-size="6.2" text-anchor="middle" transform="rotate(12 38.0 119.5)">0.39</text><text x="46.5" y="142.0" fill="#dc7474" font-size="6.2" text-anchor="middle" transform="rotate(-82 46.5 142.0)">1.59</text><text x="43.0" y="165.5" fill="#dc7474" font-size="6.2" text-anchor="middle" transform="rotate(4 43.0 165.5)">-1.20</text><text x="58.5" y="179.0" fill="#dc7474" font-size="6.2" text-anchor="middle" transform="rotate(-45 58.5 179.0)">-2.06</text><text x="101.0" y="125.0" fill="#dc7474" font-size="6.2" text-anchor="middle" transform="rotate(-42 101.0 125.0)">4.50</text><text x="128.0" y="192.0" fill="#dc7474" font-size="6.2" text-anchor="middle" transform="rotate(16 128.0 192.0)">4.13</text><text x="189.0" y="219.0" fill="#dc7474" font-size="6.2" text-anchor="middle" transform="rotate(-52 189.0 219.0)">2.06</text><text x="127.0" y="101.0" fill="#dc7474" font-size="5.5" text-anchor="middle" transform="rotate(8 127.0 101.0)">2.41</text><line x1="242.0" y1="-0.1" x2="333.8" y2="11.3" stroke="#e01414" stroke-width="1.1" stroke-dasharray="1 3.9"/><line x1="141.4" y1="64.0" x2="141.4" y2="102.0" stroke="#3c9c9c" stroke-width="0.7" stroke-dasharray="1 1.3"/><line x1="163.9" y1="61.5" x2="163.9" y2="160.5" stroke="#e8e020" stroke-width="1.4" /><defs><linearGradient id="cg" x1="0" y1="0" x2="1" y2="0"><stop offset="0" stop-color="#a8a8a8"/><stop offset=".5" stop-color="#d4d4d4"/><stop offset="1" stop-color="#a8a8a8"/></linearGradient></defs><path d="M158.2,82.2 Q165.8,80.0 173.4,82.2 L165.4,98.8 Z" fill="url(#cg)"/><line x1="163.9" y1="61.5" x2="163.9" y2="83.0" stroke="#e8e020" stroke-width="1.4" /><ellipse cx="164.7" cy="99.2" rx="10.2" ry="3.8" fill="none" stroke="#e8e020" stroke-width="1.1"/><path d="M156.0,97.5 L174.0,95.5 L182.0,94.0 L186.0,97.0 L177.0,98.5 L183.0,101.5 L196.0,101.5 L188.0,100.0 L180.0,100.5 L173.0,97.0" fill="none" stroke="#e8e020" stroke-width="1.1"/><path d="M161.3,97.0 L168.3,96.5 L165.8,101.0 L162.3,100.0 Z" fill="#30d8e0"/><line x1="163.9" y1="101.0" x2="163.9" y2="160.5" stroke="#e8e020" stroke-width="1.4" /><line x1="181.4" y1="92.8" x2="167.0" y2="109.7" stroke="#d02020" stroke-width="0.7" /><line x1="182.0" y1="92.0" x2="184.0" y2="93.5" stroke="#e03030" stroke-width="1" /><line x1="166.5" y1="103.5" x2="166.5" y2="110.0" stroke="#2030d0" stroke-width="0.8" /><line x1="167.0" y1="110.0" x2="203.0" y2="118.5" stroke="#30e040" stroke-width="1" stroke-dasharray="3.5 2.5"/><text x="167.0" y="75.5" fill="#3040e8" font-size="6" text-anchor="middle" transform="rotate(0 167.0 75.5)">Z</text><text x="192.0" y="115.0" fill="#ddd" font-size="5" text-anchor="middle" transform="rotate(10 192.0 115.0)">Y</text></svg></div>
<div class="t  al" style="top:268.2px;height:12px;line-height:12px;left:4.5px"><span class="l" style="transform:scaleX(0.938);transform-origin:left center">Mcodes:</span></div>
<div class="t  al" style="top:268.2px;height:12px;line-height:12px;left:36.5px"><span class="l" style="transform:scaleX(0.954);transform-origin:left center">M0 M5 M9 M48 M53</span></div>
<div class="t  al" style="top:282.2px;height:12px;line-height:12px;left:4.5px"><span class="l" style="transform:scaleX(0.900);transform-origin:left center">Gcodes:</span></div>
<div class="t  al" style="top:282.2px;height:12px;line-height:12px;left:36.5px"><span class="l" style="transform:scaleX(0.886);transform-origin:left center">G8 G17 G20 G40 G49 G54 G64 G80 G90 G91.1 G94 G97 G99</span></div>
<div class="t  al" style="top:295.2px;height:12px;line-height:12px;left:4.5px"><span class="l" style="transform:scaleX(0.984);transform-origin:left center">Tool:</span></div>
<div class="t  al" style="top:295.2px;height:12px;line-height:12px;left:36.5px"><span class="l" style="transform:scaleX(0.977);transform-origin:left center">No Tool</span></div>
<div class="t  ar" style="top:268.2px;height:12px;line-height:12px;right:378px"><span class="l" style="transform:scaleX(0.964);transform-origin:right center">Limits:</span></div>
<div class="led" style="left:264.5px;top:268.5px"></div>
<div class="t  ar" style="top:268.2px;height:12px;line-height:12px;right:311px"><span class="l" style="transform:scaleX(0.967);transform-origin:right center">Tool Numb:</span></div>
<div class="f " style="left:332px;top:267.5px;width:38px;height:11px"><div><span class="l" style="transform:scaleX(0.963);transform-origin:center center">0</span></div></div>
<div class="t  ar" style="top:282.2px;height:12px;line-height:12px;right:311px"><span class="l" style="transform:scaleX(0.936);transform-origin:right center">Diam:</span></div>
<div class="f " style="left:332px;top:281.5px;width:38px;height:11px"><div><span class="l" style="transform:scaleX(0.963);transform-origin:center center">0</span></div></div>
<div class="t  ar" style="top:295.2px;height:12px;line-height:12px;right:311px"><span class="l" style="transform:scaleX(0.915);transform-origin:right center">Feed Rate:</span></div>
<div class="f " style="left:332px;top:294.5px;width:38px;height:11.5px"><div><span class="l" style="transform:scaleX(0.939);transform-origin:center center">0.0</span></div></div>
<div class="t  ar" style="top:295.2px;height:12px;line-height:12px;right:395.5px"><span class="l" style="transform:scaleX(0.891);transform-origin:right center">Per Rev:</span></div>
<div class="f " style="left:250px;top:294.5px;width:37.5px;height:11.5px"><div><span class="l" style="transform:scaleX(1.000);transform-origin:center center"></span></div></div>
<div class="t  ac" style="top:17.2px;height:12px;line-height:12px;left:385px;width:200px;text-align:center"><span class="l" style="transform:scaleX(0.883);transform-origin:center center">LINEAR&nbsp; JOG&nbsp; MODE</span></div>
<div class="b " style="left:381.5px;top:28px;width:36.5px;height:28px"><div><span class="l" style="transform:scaleX(0.972);transform-origin:center center">Cont</span></div></div>
<div class="b " style="left:419px;top:28px;width:36.5px;height:28px"><div><span class="l" style="transform:scaleX(0.946);transform-origin:center center">0.750 in</span></div></div>
<div class="b " style="left:456.5px;top:28px;width:36.5px;height:28px"><div><span class="l" style="transform:scaleX(0.946);transform-origin:center center">0.500 in</span></div></div>
<div class="b " style="left:494px;top:28px;width:36.5px;height:28px"><div><span class="l" style="transform:scaleX(0.946);transform-origin:center center">0.250 in</span></div></div>
<div class="b " style="left:381.5px;top:57px;width:36.5px;height:27.5px"><div><span class="l" style="transform:scaleX(0.946);transform-origin:center center">0.100 in</span></div></div>
<div class="b " style="left:419px;top:57px;width:36.5px;height:27.5px"><div><span class="l" style="transform:scaleX(0.946);transform-origin:center center">0.075 in</span></div></div>
<div class="b " style="left:456.5px;top:57px;width:36.5px;height:27.5px"><div><span class="l" style="transform:scaleX(0.946);transform-origin:center center">0.050 in</span></div></div>
<div class="b " style="left:494px;top:57px;width:36.5px;height:27.5px"><div><span class="l" style="transform:scaleX(0.946);transform-origin:center center">0.025 in</span></div></div>
<div class="b " style="left:381.5px;top:86px;width:36.5px;height:27px"><div><span class="l" style="transform:scaleX(0.946);transform-origin:center center">0.010 in</span></div></div>
<div class="b " style="left:419px;top:86px;width:36.5px;height:27px"><div><span class="l" style="transform:scaleX(0.949);transform-origin:center center">0.0075 in</span></div></div>
<div class="b " style="left:456.5px;top:86px;width:36.5px;height:27px"><div><span class="l" style="transform:scaleX(0.946);transform-origin:center center">0.005 in</span></div></div>
<div class="b " style="left:494px;top:86px;width:36.5px;height:27px"><div><span class="l" style="transform:scaleX(0.949);transform-origin:center center">0.0025 in</span></div></div>
<div class="b " style="left:381.5px;top:115px;width:36.5px;height:26.5px"><div><span class="l" style="transform:scaleX(0.946);transform-origin:center center">0.001 in</span></div></div>
<div class="b " style="left:419px;top:115px;width:36.5px;height:26.5px"><div><span class="l" style="transform:scaleX(0.949);transform-origin:center center">0.0007 in</span></div></div>
<div class="b " style="left:456.5px;top:115px;width:36.5px;height:26.5px"><div><span class="l" style="transform:scaleX(0.949);transform-origin:center center">0.0005 in</span></div></div>
<div class="b p" style="left:494px;top:115px;width:36.5px;height:26.5px"><div><span class="l" style="transform:scaleX(0.949);transform-origin:center center">0.0002 in</span></div></div>
<div class="t  ac" style="top:24.7px;height:12px;line-height:12px;left:447.5px;width:200px;text-align:center"><span class="l" style="transform:scaleX(0.871);transform-origin:center center">SLOW</span></div>
<div class="t  ac" style="top:24.7px;height:12px;line-height:12px;left:476px;width:200px;text-align:center"><span class="l" style="transform:scaleX(0.849);transform-origin:center center">FAST</span></div>
<div class="groove" style="left:538px;top:46px;width:18.5px;height:94.5px"></div>
<div class="f " style="left:538px;top:35px;width:18.5px;height:11px"><div><span class="l" style="transform:scaleX(0.963);transform-origin:center center">0</span></div></div>
<div class="hd" style="left:539px;top:119.5px;width:16.5px;height:20px"></div>
<div class="groove" style="left:567px;top:46px;width:18.5px;height:94.5px"></div>
<div class="f " style="left:567px;top:35px;width:18.5px;height:11px"><div><span class="l" style="transform:scaleX(0.963);transform-origin:center center">0</span></div></div>
<div class="hd" style="left:568px;top:119.5px;width:16.5px;height:20px"></div>
<div class="b ic" style="left:600px;top:20px;width:35.5px;height:35px"><div><svg width="26" height="26" viewBox="0 0 26 26"><defs><linearGradient id="dg" x1="0" y1="0" x2="1" y2="1"><stop offset="0" stop-color="#3aa8e4"/><stop offset="1" stop-color="#1878b8"/></linearGradient></defs><rect x="7" y="2.1" width="15.2" height="20.4" fill="#141414"/><path d="M7.9 3 L20 4.4 L20 20.7 L7.9 22.1 Z" fill="url(#dg)"/><circle cx="18.6" cy="11.8" r="0.7" fill="#0a2a44"/><path d="M3.7 14.4 L9.3 14.4 L9.3 11.4 L14.7 16.5 L9.3 21.6 L9.3 18.8 L3.7 18.8 Z" fill="#e01822" stroke="#e8e8e8" stroke-width="0.8" stroke-linejoin="round"/><path d="M4.2 14.9 L9.8 14.9 L9.8 12.6 L13.9 16.5 L9.8 20.4 L9.8 18.3 L4.2 18.3 Z" fill="#e01822"/><path d="M4.2 14.9 L9.8 14.9 L9.8 12.6 L13.9 16.5 Z" fill="#f04850" opacity=".6"/></svg></div></div>
<div class="b " style="left:600px;top:75px;width:35.5px;height:32px"><div><span class="l" style="transform:scaleX(0.860);transform-origin:center center">HELP</span></div></div>
<div class="b " style="left:600px;top:112px;width:35.5px;height:31px"><div><span class="l" style="transform:scaleX(0.947);transform-origin:center center">Full</span></div></div>
<div class="b " style="left:600px;top:148px;width:35.5px;height:31.5px"><div><span class="l" style="transform:scaleX(0.831);transform-origin:center center">KEY</span><span class="l" style="transform:scaleX(0.903);transform-origin:center center">BOARD</span></div></div>
<div class="b " style="left:598px;top:188px;width:38.3px;height:38px"><div><span class="l" style="transform:scaleX(0.851);transform-origin:center center">SPARE-1</span></div></div>
<div class="b " style="left:598px;top:230px;width:38.3px;height:37px"><div><span class="l" style="transform:scaleX(0.851);transform-origin:center center">SPARE-2</span></div></div>
<div class="b " style="left:598px;top:272px;width:38.3px;height:36.5px"><div><span class="l" style="transform:scaleX(0.911);transform-origin:center center">AUTO</span></div></div>
<div class="b " style="left:598px;top:314px;width:38.3px;height:36.5px"><div><span class="l" style="transform:scaleX(0.949);transform-origin:center center">MDI</span></div></div>
<div class="b p" style="left:598px;top:355px;width:38.3px;height:37.5px"><div><span class="l" style="transform:scaleX(0.928);transform-origin:center center">MANUAL</span></div></div>
<div class="b p" style="left:598px;top:397px;width:38.3px;height:37.5px"><div><span class="l" style="transform:scaleX(0.876);transform-origin:center center">POWER</span></div></div>
<div class="b " style="left:598px;top:442.6px;width:38.3px;height:47.8px"><div><span class="l" style="transform:scaleX(0.844);transform-origin:center center">ESTOP</span><span class="l" style="transform:scaleX(0.855);transform-origin:center center">PUSH</span><span class="l" style="transform:scaleX(0.974);transform-origin:center center">here</span></div></div>
<div class="f " style="left:394px;top:160px;width:61.5px;height:14.5px;font-size:10.4px"><div><span class="l" style="transform:scaleX(0.951);transform-origin:center center">0.0002 "</span></div></div>
<div class="t  ac" style="top:162.2px;height:12px;line-height:12px;left:424px;width:200px;text-align:center"><span class="l" style="transform:scaleX(0.866);transform-origin:center center">RATE</span></div>
<div class="f " style="left:534.5px;top:160px;width:42.5px;height:14.5px;font-size:10.4px"><div><span class="l" style="transform:scaleX(0.946);transform-origin:center center">15.0</span></div></div>
<div class="b " style="left:470.5px;top:155px;width:29.5px;height:28px;font-size:11.3px"><div><span class="l" style="transform:scaleX(0.868);transform-origin:center center">Y+</span></div></div>
<div class="b " style="left:394.5px;top:185px;width:26px;height:26px;font-size:11.3px"><div><span class="l" style="transform:scaleX(0.898);transform-origin:center center">Z+</span></div></div>
<div class="b " style="left:437px;top:183px;width:29px;height:29px;font-size:11.3px"><div><span class="l" style="transform:scaleX(0.842);transform-origin:center center">X-</span></div></div>
<div class="b " style="left:504.5px;top:183px;width:28.5px;height:29px;font-size:11.3px"><div><span class="l" style="transform:scaleX(0.896);transform-origin:center center">X+</span></div></div>
<div class="b " style="left:550.5px;top:185px;width:26px;height:25.5px;font-size:11.3px"><div><span class="l" style="transform:scaleX(0.922);transform-origin:center center">A+</span></div></div>
<div class="b " style="left:394.5px;top:216px;width:26px;height:25px;font-size:11.3px"><div><span class="l" style="transform:scaleX(0.815);transform-origin:center center">Z-</span></div></div>
<div class="b " style="left:470.5px;top:213px;width:29.5px;height:28px;font-size:11.3px"><div><span class="l" style="transform:scaleX(0.865);transform-origin:center center">Y-</span></div></div>
<div class="b " style="left:550.5px;top:216px;width:26px;height:25px;font-size:11.3px"><div><span class="l" style="transform:scaleX(0.892);transform-origin:center center">A-</span></div></div>
<div class="b " style="left:409px;top:249.5px;width:41.5px;height:26px"><div><span class="l" style="transform:scaleX(0.886);transform-origin:center center">POSITION</span><span class="l" style="transform:scaleX(0.922);transform-origin:center center">MODE</span></div></div>
<div class="b p" style="left:464px;top:249.5px;width:42.5px;height:26px"><div><span class="l" style="transform:scaleX(0.875);transform-origin:center center">LINEAR</span><span class="l" style="transform:scaleX(0.922);transform-origin:center center">MODE</span></div></div>
<div class="b " style="left:518.5px;top:249.5px;width:42px;height:26px"><div><span class="l" style="transform:scaleX(0.888);transform-origin:center center">ANGULAR</span><span class="l" style="transform:scaleX(0.922);transform-origin:center center">MODE</span></div></div>
<div class="b p" style="left:409px;top:278.5px;width:41.5px;height:25.5px"><div><span class="l" style="transform:scaleX(0.871);transform-origin:center center">SLOW</span></div></div>
<div class="b " style="left:518.5px;top:278.5px;width:42px;height:25.5px"><div><span class="l" style="transform:scaleX(0.849);transform-origin:center center">FAST</span></div></div>
<div class="t  ac" style="top:310.7px;height:12px;line-height:12px;left:397.5px;width:200px;text-align:center"><span class="l" style="transform:scaleX(0.859);transform-origin:center center">SPINDLE</span></div>
<div class="t  al" style="top:330.7px;height:12px;line-height:12px;left:406.5px;font-size:11px"><span class="l" style="transform:scaleX(0.899);transform-origin:left center">als</span></div>
<div class="f " style="left:422px;top:326px;width:49.5px;height:18px;font-size:10.4px"><div><span class="l" style="transform:scaleX(0.963);transform-origin:center center">0</span></div></div>
<div class="b " style="left:477px;top:323.5px;width:32px;height:23.5px"><div><span class="l" style="transform:scaleX(0.935);transform-origin:center center">25%</span></div></div>
<div class="b " style="left:512.5px;top:323.5px;width:31.5px;height:23.5px"><div><span class="l" style="transform:scaleX(0.935);transform-origin:center center">50%</span></div></div>
<div class="b " style="left:548px;top:323.5px;width:31.5px;height:23.5px"><div><span class="l" style="transform:scaleX(0.941);transform-origin:center center">100%</span></div></div>
<div class="b " style="left:417px;top:355px;width:29.5px;height:23px"><div><span class="l" style="transform:scaleX(0.894);transform-origin:center center">RPM</span><span class="l" style="transform:scaleX(0.839);transform-origin:center center">DEC</span></div></div>
<div class="hgroove" style="left:449px;top:355px;width:99px;height:23px"></div>
<div class="hd" style="left:449.5px;top:356px;width:19px;height:21px"></div>
<div class="b " style="left:551px;top:355px;width:28.5px;height:23px"><div><span class="l" style="transform:scaleX(0.894);transform-origin:center center">RPM</span><span class="l" style="transform:scaleX(0.873);transform-origin:center center">INC</span></div></div>
<div class="b p" style="left:417px;top:388px;width:48px;height:35.5px"><div><span class="l" style="transform:scaleX(0.813);transform-origin:center center">REVERSE</span></div></div>
<div class="b dis" style="left:471.5px;top:388px;width:53.5px;height:35.5px"><div><span class="l" style="transform:scaleX(0.855);transform-origin:center center">STOP</span></div></div>
<div class="b " style="left:531.5px;top:388px;width:48px;height:35.5px"><div><span class="l" style="transform:scaleX(0.896);transform-origin:center center">FORWARD</span></div></div>
<div class="pb" style="left:408px;top:430px;width:149.5px;height:16px"><div class="pbt" style="right:9.5px;top:0"><span class="l" style="transform:scaleX(0.963);transform-origin:right center">3000</span></div><div class="pbg" style="width:123.5px"></div><div class="pbt w" style="left:10px">0</div><div class="pbt w" style="left:61px;width:20px;text-align:center">83%</div></div>
<div class="led" style="left:565px;top:432px"></div>
<div class="b " style="left:410.5px;top:454.5px;width:36px;height:34.5px"><div><span class="l" style="transform:scaleX(0.899);transform-origin:center center">FLOOD</span></div></div>
<div class="b " style="left:448.5px;top:454.5px;width:35px;height:34.5px"><div><span class="l" style="transform:scaleX(0.876);transform-origin:center center">MIST</span></div></div>
<div class="b " style="left:486px;top:454.5px;width:35px;height:34.5px"><div><span class="l" style="transform:scaleX(0.900);transform-origin:center center">AUX</span></div></div>
<div class="f clock" style="left:526px;top:453px;width:63px;height:37px"><div><span class="l" style="transform:scaleX(0.950);transform-origin:center center">Mon 08:56 55</span></div></div>
<div class="b p" style="left:6px;top:454px;width:35.8px;height:35.7px"><div><span class="l" style="transform:scaleX(0.871);transform-origin:center center">GRAPH</span></div></div>
<div class="b " style="left:45.3px;top:454px;width:35.8px;height:35.7px"><div><span class="l" style="transform:scaleX(0.919);transform-origin:center center">HOME</span></div></div>
<div class="b " style="left:84.6px;top:454px;width:35.8px;height:35.7px"><div><span class="l" style="transform:scaleX(0.913);transform-origin:center center">TOOL</span></div></div>
<div class="b " style="left:123.9px;top:454px;width:35.8px;height:35.7px"><div><span class="l" style="transform:scaleX(0.866);transform-origin:center center">PROBE</span></div></div>
<div class="b " style="left:163.2px;top:454px;width:35.8px;height:35.7px"><div><span class="l" style="transform:scaleX(0.913);transform-origin:center center">TOOL</span><span class="l" style="transform:scaleX(0.823);transform-origin:center center">OFFSETS</span></div></div>
<div class="b " style="left:202.5px;top:454px;width:35.8px;height:35.7px"><div><span class="l" style="transform:scaleX(0.877);transform-origin:center center">ORGIN</span><span class="l" style="transform:scaleX(0.823);transform-origin:center center">OFFSETS</span></div></div>
<div class="b " style="left:241.8px;top:454px;width:35.8px;height:35.7px"><div><span class="l" style="transform:scaleX(0.898);transform-origin:center center">MACRO</span></div></div>
<div class="b " style="left:281.1px;top:454px;width:35.8px;height:35.7px"><div><span class="l" style="transform:scaleX(0.867);transform-origin:center center">EDIT</span><span class="l" style="transform:scaleX(0.857);transform-origin:center center">GCODE</span></div></div>
<div class="b " style="left:320.4px;top:454px;width:35.8px;height:35.7px"><div><span class="l" style="transform:scaleX(0.921);transform-origin:center center">CAM</span><span class="l" style="transform:scaleX(0.883);transform-origin:center center">VIEW</span></div></div>
<div class="b " style="left:359.7px;top:454px;width:35.8px;height:35.7px"><div><span class="l" style="transform:scaleX(0.833);transform-origin:center center">FILE</span></div></div>
<div class="b " style="left:5.5px;top:312px;width:26.8px;height:24px"><div><span class="l" style="transform:scaleX(0.934);transform-origin:center center">Axis</span><span class="l" style="transform:scaleX(0.963);transform-origin:center center">4</span></div></div>
<div class="b " style="left:5.5px;top:339px;width:26.8px;height:24px"><div><span class="l" style="transform:scaleX(0.951);transform-origin:center center">Quick</span><span class="l" style="transform:scaleX(0.961);transform-origin:center center">Zero</span></div></div>
<div class="b " style="left:5.5px;top:366px;width:26.8px;height:24px"><div><span class="l" style="transform:scaleX(0.961);transform-origin:center center">Macro</span></div></div>
<div class="b " style="left:5.5px;top:393px;width:26.8px;height:24px"><div><span class="l" style="transform:scaleX(0.961);transform-origin:center center">Over</span><span class="l" style="transform:scaleX(0.906);transform-origin:center center">Rides</span></div></div>
<div class="b " style="left:5.5px;top:421px;width:26.8px;height:24px"><div><span class="l" style="transform:scaleX(0.899);transform-origin:center center">DRO</span></div></div>
<div class="t  ac" style="top:310.7px;height:12px;line-height:12px;left:36.5px;width:200px;text-align:center"><span class="l" style="transform:scaleX(0.874);transform-origin:center center">OVERRIDE&nbsp; %&nbsp; ADJUSTMENT</span></div>
<div class="b " style="left:39.5px;top:322.6px;width:35.5px;height:22.6px"><div><span class="l" style="transform:scaleX(0.946);transform-origin:center center">Spindle</span><span class="l" style="transform:scaleX(0.979);transform-origin:center center">Override</span></div></div>
<div class="b " style="left:87.5px;top:322.6px;width:35.5px;height:22.6px"><div><span class="l" style="transform:scaleX(0.923);transform-origin:center center">Feed</span><span class="l" style="transform:scaleX(0.979);transform-origin:center center">Override</span></div></div>
<div class="b " style="left:131.5px;top:322.6px;width:35px;height:22.6px"><div><span class="l" style="transform:scaleX(0.926);transform-origin:center center">Rapid</span><span class="l" style="transform:scaleX(0.979);transform-origin:center center">Override</span></div></div>
<div class="b " style="left:174.5px;top:322.6px;width:36px;height:22.6px"><div><span class="l" style="transform:scaleX(0.971);transform-origin:center center">Angular</span><span class="l" style="transform:scaleX(0.956);transform-origin:center center">Jog Ovr</span></div></div>
<div class="f fl" style="left:42.5px;top:349.5px;width:38px;height:11px"><div><span class="l" style="transform:scaleX(0.950);transform-origin:left center">100.0</span></div></div>
<div class="f fl" style="left:86.5px;top:349.5px;width:38px;height:11px"><div><span class="l" style="transform:scaleX(0.950);transform-origin:left center">100.0</span></div></div>
<div class="f fl" style="left:130px;top:349.5px;width:38px;height:11px"><div><span class="l" style="transform:scaleX(0.950);transform-origin:left center">100.0</span></div></div>
<div class="f fl" style="left:173.5px;top:349.5px;width:38px;height:11px"><div><span class="l" style="transform:scaleX(0.950);transform-origin:left center">360.0</span></div></div>
<div class="vg" style="left:58.5px;top:367px;width:3.5px;height:71.5px"><div class="vgf" style="top:35.8px"></div></div>
<div class="knob" style="left:54.8px;top:397.4px"></div>
<div class="vg" style="left:101.1px;top:367px;width:3.5px;height:71.5px"><div class="vgf" style="top:35.8px"></div></div>
<div class="knob" style="left:97.4px;top:397.4px"></div>
<div class="vg" style="left:151.3px;top:367px;width:3.5px;height:71.5px"><div class="vgf" style="top:2.5px"></div></div>
<div class="knob" style="left:147.6px;top:364.1px"></div>
<div class="vg" style="left:189.2px;top:367px;width:3.5px;height:71.5px"><div class="vgf" style="top:61.7px"></div></div>
<div class="knob" style="left:185.5px;top:423.3px"></div>
<div class="b p" style="left:240.5px;top:312px;width:26px;height:24.3px"><div><span class="l" style="transform:scaleX(0.859);transform-origin:center center">ABS</span></div></div>
<div class="b " style="left:240.5px;top:338.8px;width:26px;height:23.7px"><div><span class="l" style="transform:scaleX(0.851);transform-origin:center center">DTG</span></div></div>
<div class="b " style="left:240.5px;top:366px;width:26px;height:24px"><div><span class="l" style="transform:scaleX(0.827);transform-origin:center center">REL</span></div></div>
<div class="b " style="left:240.5px;top:393.3px;width:26px;height:23.7px"><div><span class="l" style="transform:scaleX(0.886);transform-origin:center center">INCH</span></div></div>
<div class="b " style="left:240.5px;top:421px;width:26px;height:23.7px"><div><span class="l" style="transform:scaleX(0.835);transform-origin:center center">SPARE</span></div></div>
<div class="dro" style="left:271.5px;top:309px;width:127.5px;height:34.7px"><span class="ax"><span class="l" style="transform:scaleX(0.877);transform-origin:left center">X</span></span><span class="nm"><span class="l" style="transform:scaleX(0.952);transform-origin:right center">0.0000</span></span></div>
<div class="dro" style="left:271.5px;top:344px;width:127.5px;height:35.4px"><span class="ax"><span class="l" style="transform:scaleX(0.825);transform-origin:left center">Y</span></span><span class="nm"><span class="l" style="transform:scaleX(0.952);transform-origin:right center">0.0000</span></span></div>
<div class="dro" style="left:271.5px;top:380px;width:127.5px;height:34.6px"><span class="ax"><span class="l" style="transform:scaleX(0.880);transform-origin:left center">Z</span></span><span class="nm"><span class="l" style="transform:scaleX(0.952);transform-origin:right center">0.0000</span></span></div>
<div class="dro" style="left:271.5px;top:415.5px;width:127.5px;height:34.5px"><span class="ax"><span class="l" style="transform:scaleX(0.926);transform-origin:left center">A</span></span><span class="nm"><span class="l" style="transform:scaleX(0.952);transform-origin:right center">0.0000</span></span></div>
<div id="lstrip"></div><div id="frame"></div>
</div>
</body></html>
